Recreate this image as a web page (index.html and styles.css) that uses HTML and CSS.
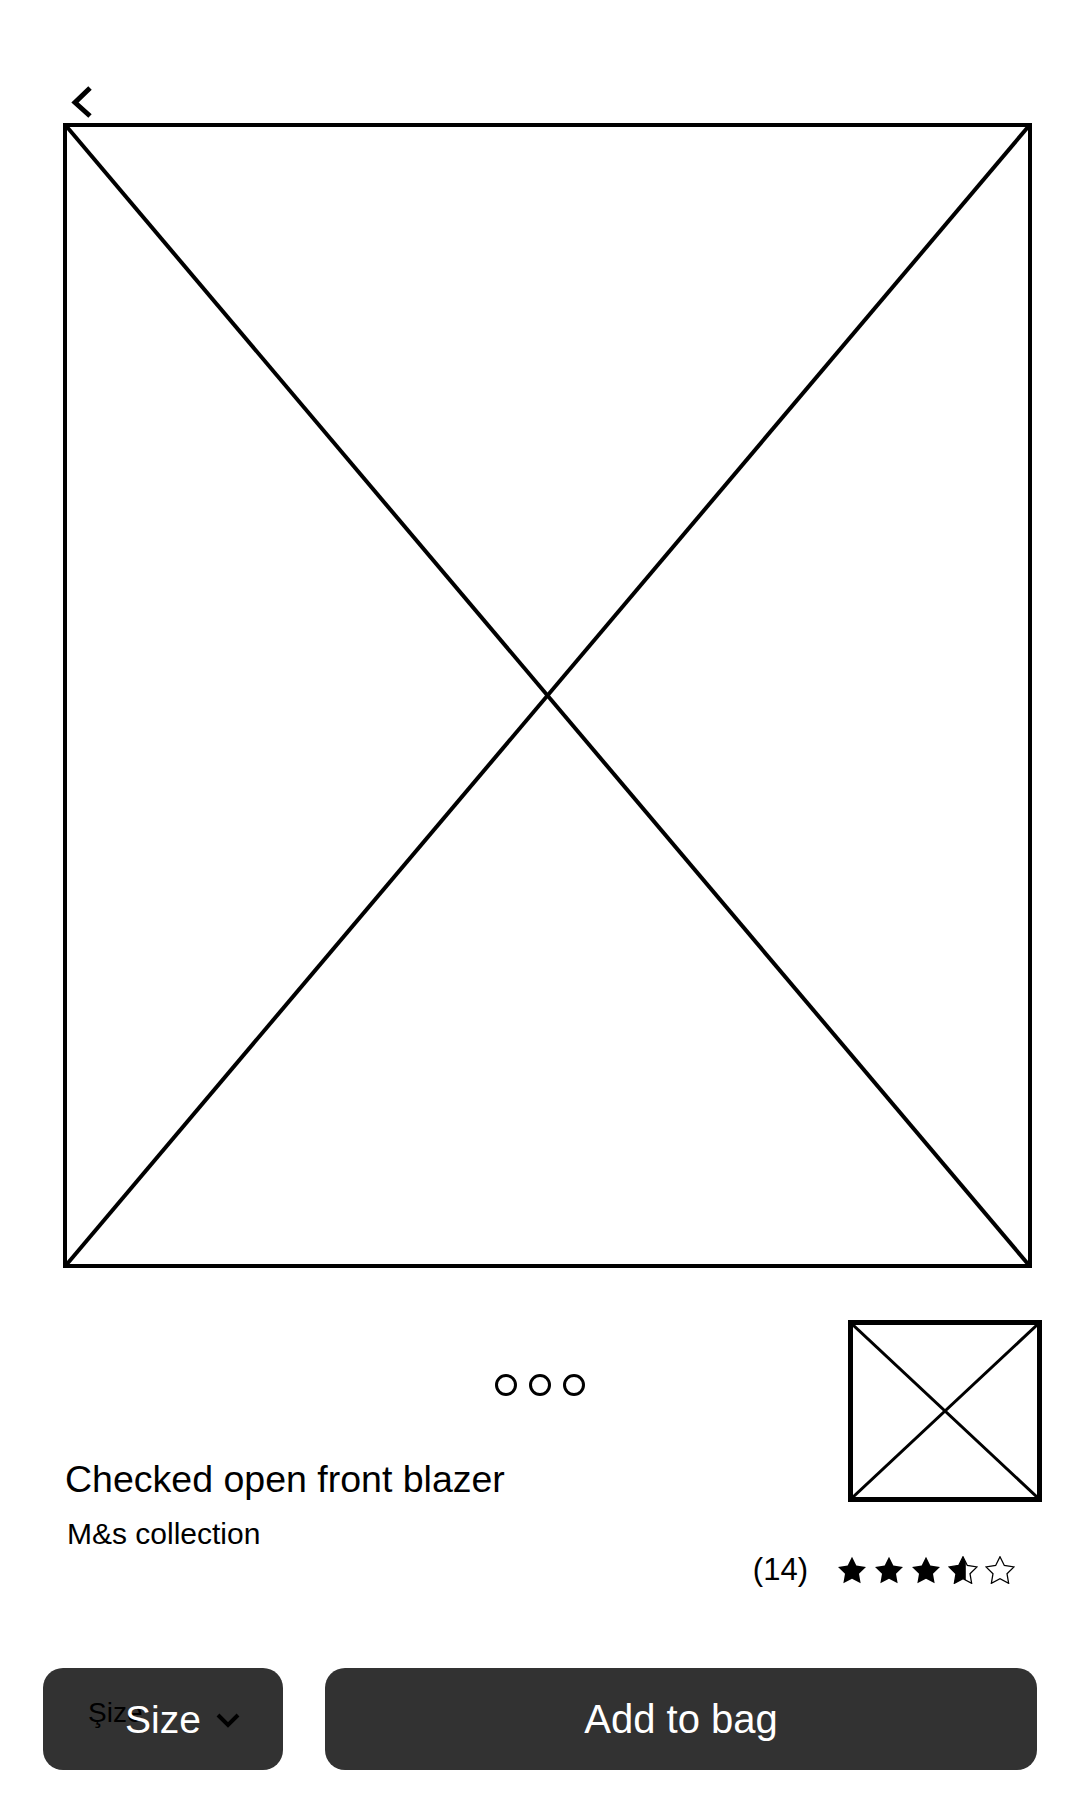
FILE: index.html
```html
<!DOCTYPE html>
<html lang="en">
<head>
    <meta charset="UTF-8">
    <meta name="viewport" content="width=device-width, initial-scale=1.0">
    <title>Checked open front blazer</title>
    <link rel="stylesheet" href="styles.css">
</head>
<body>

<div class="header">
    <svg class="back" width="24" height="36" viewBox="0 0 24 36">
        <polyline points="20,4 5,18.5 20,32" fill="none" stroke="#000" stroke-width="5"/>
    </svg>
</div>

<div class="hero">
    <svg viewBox="0 0 100 100" preserveAspectRatio="none">
        <line x1="0" y1="0" x2="100" y2="100" stroke="#000" stroke-width="4" vector-effect="non-scaling-stroke"/>
        <line x1="100" y1="0" x2="0" y2="100" stroke="#000" stroke-width="4" vector-effect="non-scaling-stroke"/>
    </svg>
</div>

<div class="details">
    <div class="info">
        <div class="dots">
            <span class="dot"></span>
            <span class="dot"></span>
            <span class="dot"></span>
        </div>
        <h1 class="title">Checked open front blazer</h1>
    </div>
    <div class="thumb">
        <svg viewBox="0 0 100 100" preserveAspectRatio="none">
            <line x1="0" y1="0" x2="100" y2="100" stroke="#000" stroke-width="3" vector-effect="non-scaling-stroke"/>
            <line x1="100" y1="0" x2="0" y2="100" stroke="#000" stroke-width="3" vector-effect="non-scaling-stroke"/>
        </svg>
    </div>
</div>

<div class="meta">
    <p class="brand">M&amp;s collection</p>
    <div class="rating">
        <span class="count">(14)</span>
        <div class="stars">
            <svg class="star" viewBox="1.5 1.5 21 20"><polygon points="12,2 15.09,8.26 22,9.27 17,14.14 18.18,21.02 12,17.77 5.82,21.02 7,14.14 2,9.27 8.91,8.26" fill="#000"/></svg>
            <svg class="star" viewBox="1.5 1.5 21 20"><polygon points="12,2 15.09,8.26 22,9.27 17,14.14 18.18,21.02 12,17.77 5.82,21.02 7,14.14 2,9.27 8.91,8.26" fill="#000"/></svg>
            <svg class="star" viewBox="1.5 1.5 21 20"><polygon points="12,2 15.09,8.26 22,9.27 17,14.14 18.18,21.02 12,17.77 5.82,21.02 7,14.14 2,9.27 8.91,8.26" fill="#000"/></svg>
            <svg class="star" viewBox="1.5 1.5 21 20">
                <defs><clipPath id="half"><rect x="0" y="0" width="14" height="24"/></clipPath></defs>
                <polygon points="12,2 15.09,8.26 22,9.27 17,14.14 18.18,21.02 12,17.77 5.82,21.02 7,14.14 2,9.27 8.91,8.26" fill="none" stroke="#000" stroke-width="0.9"/>
                <polygon points="12,2 15.09,8.26 22,9.27 17,14.14 18.18,21.02 12,17.77 5.82,21.02 7,14.14 2,9.27 8.91,8.26" fill="#000" clip-path="url(#half)"/>
            </svg>
            <svg class="star" viewBox="1.5 1.5 21 20"><polygon points="12,2 15.09,8.26 22,9.27 17,14.14 18.18,21.02 12,17.77 5.82,21.02 7,14.14 2,9.27 8.91,8.26" fill="none" stroke="#000" stroke-width="0.9"/></svg>
        </div>
    </div>
</div>

<div class="actions">
    <button class="size-btn">
        <span class="size-label">Şize</span>
        <span class="size-text">Size</span>
        <svg class="chevron" width="24" height="16" viewBox="0 0 24 16">
            <polyline points="2,3 12,13 22,3" fill="none" stroke="#000" stroke-width="4"/>
        </svg>
    </button>
    <button class="add-btn">Add to bag</button>
</div>

</body>
</html>
```

FILE: styles.css
```css
body {
    margin: 0;
    font-family: "Liberation Sans", Arial, sans-serif;
    color: #000;
    background: #fff;
}

.header {
    height: 123px;
    padding: 84px 0 0 70px;
    box-sizing: border-box;
}

.back {
    display: block;
}

.hero {
    width: 969px;
    height: 1145px;
    margin-left: 63px;
    border: 4px solid #000;
    box-sizing: border-box;
}

.hero svg, .thumb svg {
    display: block;
    width: 100%;
    height: 100%;
}

.details {
    display: flex;
    margin-top: 52px;
    padding: 0 38px 0 63px;
}

.info {
    flex: 1;
}

.dots {
    display: flex;
    gap: 12px;
    padding-left: 432px;
    margin-top: 54px;
}

.dot {
    width: 22px;
    height: 22px;
    border: 3px solid #000;
    border-radius: 50%;
    box-sizing: border-box;
}

.title {
    margin: 62px 0 0 2px;
    font-size: 37.5px;
    font-weight: normal;
    line-height: 42px;
}

.thumb {
    width: 194px;
    height: 182px;
    border: 5px solid #000;
    box-sizing: border-box;
}

.meta {
    display: flex;
    justify-content: space-between;
    align-items: flex-start;
    padding: 0 65px 0 67px;
}

.brand {
    margin: 15px 0 0;
    font-size: 30px;
    line-height: 34px;
}

.rating {
    display: flex;
    align-items: center;
    gap: 29px;
    margin-top: 51px;
}

.count {
    font-size: 31px;
    line-height: 34px;
}

.stars {
    display: flex;
    gap: 7px;
}

.star {
    display: block;
    width: 30px;
    height: 28px;
}

.actions {
    display: flex;
    gap: 42px;
    margin-top: 81px;
    padding: 0 43px;
}

button {
    height: 102px;
    border: none;
    border-radius: 20px;
    background-color: #323232;
    color: white;
    font-family: "Liberation Sans", Arial, sans-serif;
    cursor: pointer;
}

.size-btn {
    position: relative;
    display: flex;
    align-items: center;
    width: 240px;
    padding: 0 0 0 82px;
}

.size-label {
    position: absolute;
    left: 45px;
    top: 29px;
    font-size: 28px;
    line-height: 32px;
    color: #000;
}

.size-text {
    position: relative;
    font-size: 39px;
    line-height: 45px;
}

.chevron {
    display: block;
    margin-left: 15px;
    margin-top: 2px;
}

.add-btn {
    flex: 1;
    font-size: 40px;
    line-height: 45px;
}
```
